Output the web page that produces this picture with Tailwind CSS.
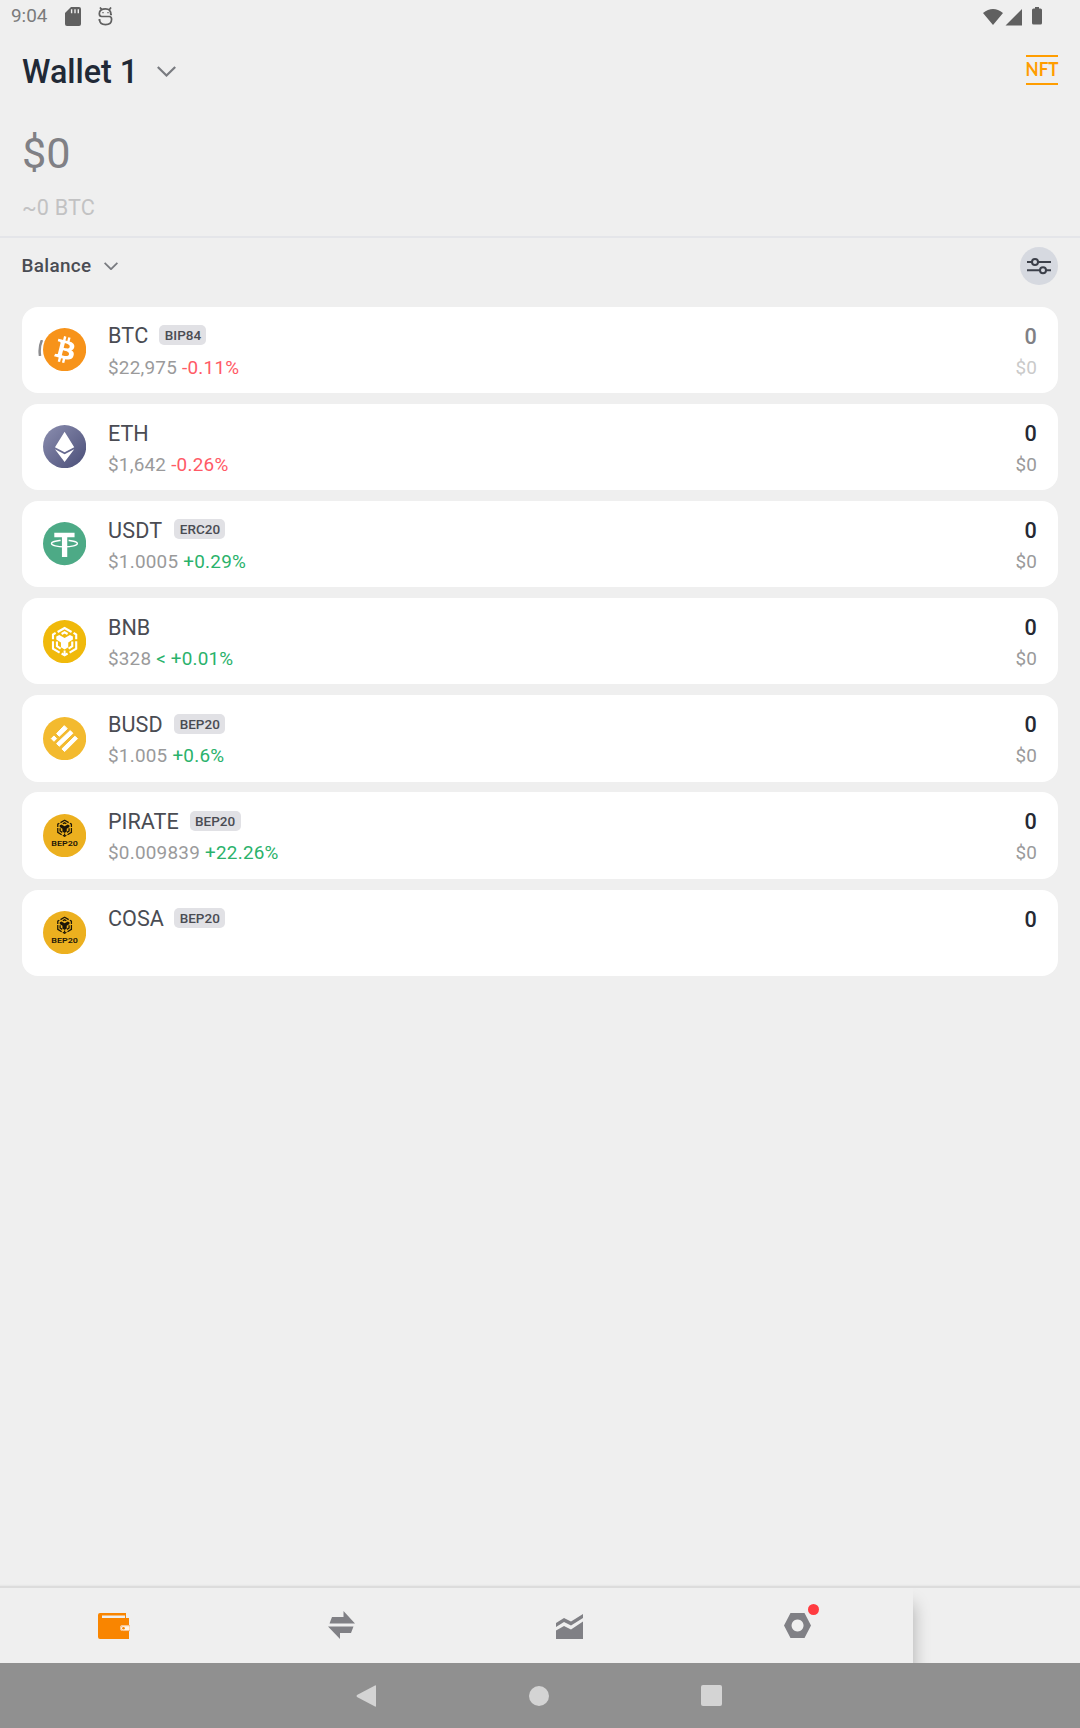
<!DOCTYPE html>
<html lang="en">
<head>
    <meta charset="UTF-8">
    <title>Wallet</title>
    <script src="https://cdn.jsdelivr.net/npm/@tailwindcss/browser@4"></script>
</head>
<body class="bg-[#efefef] font-[Roboto,sans-serif] text-[#4a4c53]">
    <!-- shared coin icons -->
    <svg class="hidden">
        <symbol id="cube" viewBox="0 0 80 92">
            <g fill="none" stroke="currentColor" stroke-width="6.5">
                <path d="M19 17 40 5 61 17M31 23 40 18 49 23"/>
                <path d="M13 20 5 25V39M67 20 75 25V39"/>
                <path d="M5 45V67L25 79M75 45V67L55 79"/>
                <path d="M17 46V60L28 67M63 46V60L52 67"/>
                <path d="M31 82 40 87 49 82"/>
            </g>
            <path fill="currentColor" d="M15 31 24 26 40 35 56 26 65 31V40L51 49V63L40 70 29 63V49L15 40ZM37 73H43V84H37Z"/>
        </symbol>
        <symbol id="bep20" viewBox="0 0 130 130">
            <circle cx="65" cy="65" r="65" fill="#ecb01f"/>
            <use href="#cube" x="40" y="16" width="50" height="54" class="text-[#1c1608]"/>
            <text x="65" y="96" text-anchor="middle" textLength="80" lengthAdjust="spacingAndGlyphs" font-size="20" font-weight="600" fill="#1c1608">BEP20</text>
        </symbol>
    </svg>

    <div class="flex h-[1728px] w-[1080px] flex-col overflow-hidden">
        <!-- status bar -->
        <div class="flex h-8 shrink-0 items-center justify-between pl-[11px] pr-[37px] text-[#606060]">
            <div class="flex items-center">
                <span class="w-[54px] text-[18.9px] leading-8 text-[#7b7b7b]">9:04</span>
                <svg class="h-[19px] w-4" viewBox="0 0 16 19"><path fill="currentColor" d="M6 0h8q2 0 2 2v15q0 2-2 2H2q-2 0-2-2V6Z"/><path stroke="#efefef" stroke-width="1.4" d="M6.6 2.3v4M10 2.3v4M13.3 2.3v4"/></svg>
                <svg class="ml-[17px] h-[19px] w-[15px]" viewBox="0 0 15 19" fill="none" stroke="currentColor" stroke-width="1.7"><path d="M14 7.500H12.800C12.800 3.500 11 1.800 7.500 1.800S1.300 3.500 1.300 6.500c0 2 .8 3 2.400 3h7.600c1.500 0 2.300 1 2.300 2.700 0 4-2.600 5.400-6.100 5.400S1.600 16 1.600 12.800H.5M2 .4l1.500 2M13 .4l-1.500 2"/><path d="M5 5v1.300M10 5v1.300" stroke-width="1.3"/></svg>
            </div>
            <svg class="h-[19px] w-[60px]" viewBox="0 0 60 19" fill="currentColor"><path d="M0 6Q10-2 20 6L10 18ZM39 2v16.500H22.500ZM52 0h4v1.500h1.500q1.500 0 1.500 1.500v13q0 1.500-1.500 1.500h-7q-1.500 0-1.500-1.500V3q0-1.500 1.500-1.500H52Z"/></svg>
        </div>

        <!-- header -->
        <div class="flex h-20 shrink-0 items-center justify-between px-[22px]">
            <div class="flex items-center gap-[19px] text-[#212936]">
                <h1 class="pb-px text-[32.3px] font-medium leading-9">Wallet 1</h1>
                <svg class="mb-px h-[11px] w-[19px]" viewBox="0 0 19 11" fill="none" stroke="#797b80" stroke-width="2.2"><path d="M.8 1 9.500 9.500 18.200 1"/></svg>
            </div>
            <div class="mb-1 h-[30px] w-8 border-y-[2px] border-[#ff9d00] text-[#ff9d00]">
                <svg class="-ml-1 h-[26px] w-10" viewBox="0 0 40 26"><text x="3.5" y="19" textLength="33" lengthAdjust="spacingAndGlyphs" font-family="Lato" font-weight="700" font-size="18.5" fill="currentColor">NFT</text></svg>
            </div>
        </div>
        <div class="h-[126px] shrink-0 border-b-2 border-[#e4e5e9] px-[22px] pt-[17px]">
            <div class="text-[43.2px] leading-[50px] text-[#808085]">$0</div>
            <div class="mt-4 text-[21.6px] leading-[26px] tracking-[0.15px] text-[#c2c2c3]">~0 BTC</div>
        </div>

        <div class="flex h-[68px] shrink-0 items-start justify-between px-[21.6px] pt-[9px]">
            <div class="flex h-[38px] items-center gap-[13px]">
                <span class="pt-px text-[18.9px] font-medium tracking-[0.3px]">Balance</span>
                <svg class="h-2 w-[14px]" viewBox="0 0 14 8" fill="none" stroke="#797b80" stroke-width="1.8"><path d="M.6.8 7 7.200 13.400.8"/></svg>
            </div>
            <div class="flex size-[38px] items-center justify-center rounded-full bg-[#d6d9e0]">
                <svg class="h-[18px] w-6" viewBox="0 0 24 18" fill="none" stroke="#3c404a" stroke-width="2"><path d="M0 5h5M11 5h13M0 13.300h13M19 13.300h5"/><circle cx="8" cy="5" r="3"/><circle cx="16" cy="13.300" r="3"/></svg>
            </div>
        </div>

        <!-- coins -->
        <div class="flex flex-1 flex-col gap-[10.8px] px-[21.6px] pt-[0.5px]">
            <div class="relative flex h-[86.4px] shrink-0 rounded-[16.2px] bg-white px-[21.6px]">
                <svg class="absolute left-4 top-[33px] h-4 w-[5px]" viewBox="0 0 5 16" fill="none" stroke="#8b8b8e" stroke-width="2.5"><path d="M4 0Q.7 7 2 16"/></svg>
                <svg class="relative mt-[21.6px] size-[43.2px]" viewBox="0 0 32 32"><circle cx="16" cy="16" r="16" fill="#f7931a"/><path fill="#fff" d="M23.189 14.020c.314-2.096-1.283-3.223-3.465-3.975l.708-2.840-1.728-.43-.69 2.765c-.454-.114-.92-.22-1.385-.326l.695-2.783L15.596 6l-.708 2.839c-.376-.086-.746-.17-1.104-.26l.002-.009-2.384-.595-.46 1.846s1.283.294 1.256.312c.7.175.826.638.805 1.006l-.806 3.235c.048.012.11.03.18.057l-.183-.045-1.130 4.532c-.086.212-.303.531-.793.41.018.025-1.256-.313-1.256-.313l-.858 1.978 2.250.561c.418.105.828.215 1.231.318l-.715 2.872 1.727.43.708-2.840c.472.127.93.245 1.378.357l-.706 2.828 1.728.43.715-2.866c2.948.558 5.164.333 6.097-2.333.752-2.146-.037-3.385-1.588-4.192 1.130-.26 1.980-1.003 2.207-2.538zm-3.950 5.538c-.533 2.147-4.148.986-5.320.695l.95-3.805c1.172.293 4.929.872 4.370 3.110zm.535-5.569c-.487 1.953-3.495.96-4.470.717l.86-3.450c.975.243 4.118.696 3.610 2.733z"/></svg>
                <div class="ml-[21.6px] flex-1 pt-[17px]">
                    <div class="flex h-[26px] items-center gap-[11px] text-[21.6px] tracking-[0.2px]">BTC <span class="mb-[3px] h-5 rounded-[5px] bg-[#e1e1e5] px-[5.4px] text-[13.5px] font-medium leading-5 tracking-normal">BIP84</span></div>
                    <div class="mt-[7px] text-[18.9px] leading-[22px] tracking-[0.24px] text-[#9a9a9b]">$22,975 <span class="text-[#ff5a66]">-0.11%</span></div>
                </div>
                <div class="pt-[17px] text-right"><div class="text-[21.6px] font-medium leading-[26px] text-[#808085]">0</div><div class="mt-[7px] text-[18.9px] leading-[22px] text-[#cacaca]">$0</div></div>
            </div>

            <div class="flex h-[86.4px] shrink-0 rounded-[16.2px] bg-white px-[21.6px]">
                <svg class="mt-[21.6px] size-[43.2px]" viewBox="0 0 130 130"><defs><linearGradient id="eth" x1="0" y1="0" x2="1" y2="1"><stop offset=".1" stop-color="#8588aa"/><stop offset=".9" stop-color="#50547d"/></linearGradient></defs><circle cx="65" cy="65" r="65" fill="url(#eth)"/><path fill="#fff" d="M65 20 94 67 65 82 36 67ZM36 73 65 88 94 73 65 111Z"/></svg>
                <div class="ml-[21.6px] flex-1 pt-[17px]">
                    <div class="flex h-[26px] items-center text-[21.6px]">ETH</div>
                    <div class="mt-[7px] text-[18.9px] leading-[22px] tracking-[0.24px] text-[#9a9a9b]">$1,642 <span class="text-[#ff5a66]">-0.26%</span></div>
                </div>
                <div class="pt-[17px] text-right"><div class="text-[21.6px] font-medium leading-[26px] text-[#252933]">0</div><div class="mt-[7px] text-[18.9px] leading-[22px] text-[#9a9a9b]">$0</div></div>
            </div>

            <div class="flex h-[86.4px] shrink-0 rounded-[16.2px] bg-white px-[21.6px]">
                <svg class="mt-[21.6px] size-[43.2px]" viewBox="0 0 130 130"><circle cx="65" cy="65" r="65" fill="#4daa86"/><ellipse cx="64.5" cy="65" rx="39" ry="10" fill="none" stroke="#fff" stroke-width="4"/><path fill="#4daa86" d="M53 50H77V60H53Z"/><path fill="#fff" d="M34 32H95V46H73V105H57V46H34Z"/></svg>
                <div class="ml-[21.6px] flex-1 pt-[17px]">
                    <div class="flex h-[26px] items-center gap-3 text-[21.6px] tracking-[0.2px]">USDT <span class="mb-[3px] h-5 rounded-[5px] bg-[#e1e1e5] px-[5.4px] text-[13.5px] font-medium leading-5 tracking-normal">ERC20</span></div>
                    <div class="mt-[7px] text-[18.9px] leading-[22px] tracking-[0.24px] text-[#9a9a9b]">$1.0005 <span class="text-[#2ab26b]">+0.29%</span></div>
                </div>
                <div class="pt-[17px] text-right"><div class="text-[21.6px] font-medium leading-[26px] text-[#252933]">0</div><div class="mt-[7px] text-[18.9px] leading-[22px] text-[#9a9a9b]">$0</div></div>
            </div>

            <div class="flex h-[86.4px] shrink-0 rounded-[16.2px] bg-white px-[21.6px]">
                <svg class="mt-[21.6px] size-[43.2px] text-white" viewBox="0 0 130 130"><circle cx="65" cy="65" r="65" fill="#f0b90b"/><use href="#cube" x="25" y="19" width="80" height="92"/></svg>
                <div class="ml-[21.6px] flex-1 pt-[17px]">
                    <div class="flex h-[26px] items-center text-[21.6px]">BNB</div>
                    <div class="mt-[7px] text-[18.9px] leading-[22px] tracking-[0.2px] text-[#9a9a9b]">$328 <span class="text-[#2ab26b]">&lt; +0.01%</span></div>
                </div>
                <div class="pt-[17px] text-right"><div class="text-[21.6px] font-medium leading-[26px] text-[#252933]">0</div><div class="mt-[7px] text-[18.9px] leading-[22px] text-[#9a9a9b]">$0</div></div>
            </div>

            <div class="flex h-[86.4px] shrink-0 rounded-[16.2px] bg-white px-[21.6px]">
                <svg class="mt-[21.6px] size-[43.2px]" viewBox="0 0 130 130"><circle cx="65" cy="65" r="65" fill="#f3ba2f"/><path fill="#fff" stroke="#fff" stroke-width="3" stroke-linejoin="round" d="M64 26 73 35 49 58 41 50ZM33 57 41 65 33 73 25 65ZM82 41 90 49 49 88 41 80ZM96 58 104 65 65 104 57 96Z"/></svg>
                <div class="ml-[21.6px] flex-1 pt-[17px]">
                    <div class="flex h-[26px] items-center gap-[11.5px] text-[21.6px] tracking-[0.1px]">BUSD <span class="mb-[3px] h-5 rounded-[5px] bg-[#e1e1e5] px-[5.4px] text-[13.5px] font-medium leading-5 tracking-normal">BEP20</span></div>
                    <div class="mt-[7px] text-[18.9px] leading-[22px] tracking-[0.24px] text-[#9a9a9b]">$1.005 <span class="text-[#2ab26b]">+0.6%</span></div>
                </div>
                <div class="pt-[17px] text-right"><div class="text-[21.6px] font-medium leading-[26px] text-[#252933]">0</div><div class="mt-[7px] text-[18.9px] leading-[22px] text-[#9a9a9b]">$0</div></div>
            </div>

            <div class="flex h-[86.4px] shrink-0 rounded-[16.2px] bg-white px-[21.6px]">
                <svg class="mt-[21.6px] size-[43.2px]"><use href="#bep20"/></svg>
                <div class="ml-[21.6px] flex-1 pt-[17px]">
                    <div class="flex h-[26px] items-center gap-[11px] text-[21.6px]">PIRATE <span class="mb-[3px] h-5 rounded-[5px] bg-[#e1e1e5] px-[5.4px] text-[13.5px] font-medium leading-5">BEP20</span></div>
                    <div class="mt-[7px] text-[18.9px] leading-[22px] tracking-[0.24px] text-[#9a9a9b]">$0.009839 <span class="text-[#2ab26b]">+22.26%</span></div>
                </div>
                <div class="pt-[17px] text-right"><div class="text-[21.6px] font-medium leading-[26px] text-[#252933]">0</div><div class="mt-[7px] text-[18.9px] leading-[22px] text-[#9a9a9b]">$0</div></div>
            </div>

            <div class="flex h-[86.4px] shrink-0 rounded-[16.2px] bg-white px-[21.6px]">
                <svg class="mt-[21.6px] size-[43.2px]"><use href="#bep20"/></svg>
                <div class="ml-[21.6px] flex-1 pt-[17px]">
                    <div class="flex h-[26px] items-center gap-[10.5px] text-[21.6px]">COSA <span class="mb-[3px] h-5 rounded-[5px] bg-[#e1e1e5] px-[5.4px] text-[13.5px] font-medium leading-5">BEP20</span></div>
                </div>
                <div class="pt-[17px] text-right"><div class="text-[21.6px] font-medium leading-[26px] text-[#252933]">0</div></div>
            </div>
        </div>

        <!-- bottom navigation -->
        <div class="h-[77px] shrink-0 overflow-hidden border-t-2 border-[#dcdcdc] shadow-[0_-1px_1px_#e8e8e8]">
            <div class="grid h-[90px] w-[913px] grid-cols-4 justify-items-center pr-[2px] pt-[23px] text-[#808085] shadow-[0_16px_16px_#00000048]">
                <svg class="mt-[2px] h-[26px] w-8" viewBox="0 0 32 26"><path fill="#f98500" d="M2 0H28V5H31V12H25Q22 12 22 15T25 18H31V26H2Q0 26 0 24V2Q0 0 2 0Z"/><path fill="#efefef" d="M4 2.500H27V5H4Z"/><path d="M25 12.700h7v5h-7q-2.500 0-2.500-2.500t2.500-2.500Z" fill="#fff6e9" stroke="#f9a24a" stroke-width=".7"/><circle cx="25.5" cy="15.2" r="1.300" fill="#f98500"/></svg>
                <svg class="h-7 w-[27px]" viewBox="0 0 27 28" fill="currentColor"><path d="M15.500 0 27 12.500H1.500L4 6H15.500ZM0 15.500H25.500L23 22H12V28Z"/></svg>
                <svg class="mt-[3px] h-[25px] w-[27px]" viewBox="0 0 27 25" fill="currentColor"><path d="M0 9 8 4 15 7.500 27 0V4L15 11.500 8 8 0 13ZM0 16.500 8 12 15 15.500 27 7.500V25H0Z"/></svg>
                <div class="relative">
                    <svg class="mt-[2px] h-[25px] w-[27px]" viewBox="0 0 27 25" fill="currentColor" fill-rule="evenodd"><path d="M6.500 0h14L27 12.500 20.500 25h-14L0 12.500ZM13.500 6.500a6 6 0 1 0 .1 0Z"/></svg>
                    <span class="absolute -right-[8px] -top-[7px] size-[11px] rounded-full bg-[#ff3b40]"></span>
                </div>
            </div>
        </div>

        <!-- system navigation -->
        <div class="flex h-[65px] shrink-0 items-center justify-center gap-[152px] bg-[#909090] pr-px text-[#d4d4d4]">
            <svg class="-ml-px mr-px h-[22px] w-5" viewBox="0 0 20 22" fill="currentColor"><path d="M20 1v20q0 1-1 .6L1 12q-1-1 0-2L19 .4q1-.4 1 .6Z"/></svg>
            <div class="size-5 rounded-full bg-[#d4d4d4]"></div>
            <div class="size-[21px] rounded-xs bg-[#d4d4d4]"></div>
        </div>
    </div>
</body>
</html>
